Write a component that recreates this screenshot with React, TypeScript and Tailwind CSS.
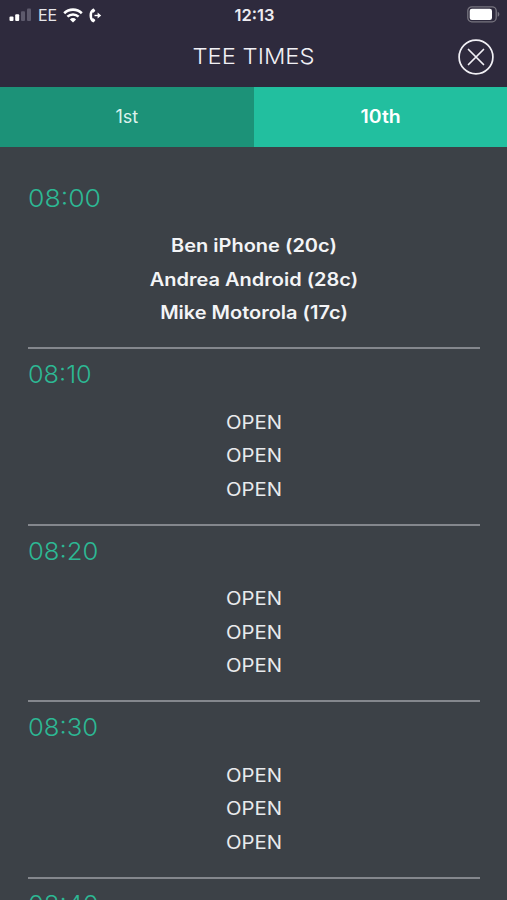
import React, { useState } from 'react';

const OPEN_SLOT = ['OPEN', 'OPEN', 'OPEN'];

const SLOTS = [
  {
    time: '08:00',
    stretch: 'scale-x-[1.085]',
    booked: true,
    names: ['Ben iPhone (20c)', 'Andrea Android (28c)', 'Mike Motorola (17c)'],
  },
  { time: '08:10', stretch: 'scale-x-[1.03]', booked: false, names: OPEN_SLOT },
  { time: '08:20', stretch: 'scale-x-[1.045]', booked: false, names: OPEN_SLOT },
  { time: '08:30', stretch: 'scale-x-[1.045]', booked: false, names: OPEN_SLOT },
  { time: '08:40', stretch: 'scale-x-[1.045]', booked: false, names: [] },
];

const SignalIcon = () => (
  <svg width="24" height="14" viewBox="0 0 24 14">
    <rect x="0.5" y="8.5" width="4" height="4.5" rx="1" fill="#fff" />
    <rect x="6.2" y="6.3" width="4" height="6.7" rx="1" fill="#fff" />
    <rect x="12" y="3.2" width="4" height="9.8" rx="1" fill="#5d5a6c" />
    <rect x="18" y="0.5" width="4" height="12.5" rx="1" fill="#5d5a6c" />
  </svg>
);

const WifiIcon = () => (
  <svg width="20" height="15" viewBox="0 0 20 15" fill="none" stroke="#fff">
    <path d="M1.2 5.2a12.6 12.6 0 0117.6 0" strokeWidth="2.6" />
    <path d="M4.4 8.7a8 8 0 0111.2 0" strokeWidth="2.5" />
    <path d="M10 14.6L6.9 11.4a4.4 4.4 0 016.2 0z" fill="#fff" stroke="none" />
  </svg>
);

const CallForwardIcon = () => (
  <svg width="13" height="15" viewBox="0 0 13 15" fill="none">
    <path
      d="M3.8.7C1.4 1.9.5 4.5.5 7.4s1 5.6 3.4 6.9c.4.2.8.1 1.1-.2l1.1-1.4c.3-.4.2-.8-.1-1.1l-1.4-1.2c-.3-.3-.7-.2-1.1 0-.3-.9-.4-1.9-.4-3s.1-2 .4-2.9c.4.2.8.2 1.1-.1L6 3.3c.3-.3.4-.7.1-1.1L4.9.8C4.6.5 4.2.5 3.8.7z"
      fill="#fff"
    />
    <path d="M5.5 7.5h4" stroke="#fff" strokeWidth="1.4" />
    <path d="M8.6 4.6l3.6 2.9-3.6 2.9z" fill="#fff" />
  </svg>
);

const BatteryIcon = () => (
  <svg width="33" height="17" viewBox="0 0 33 17">
    <rect x="0.8" y="0.8" width="28.4" height="15" rx="4" fill="none" stroke="#77747f" strokeWidth="1.3" />
    <rect x="2.7" y="2.7" width="22.3" height="11.2" rx="2.2" fill="#fff" />
    <path d="M30.7 5.8c2.2.8 2.2 4.2 0 5z" fill="#77747f" />
  </svg>
);

const CloseIcon = () => (
  <svg width="36" height="36" viewBox="0 0 36 36" fill="none" stroke="#f1f0f5" strokeWidth="1.7">
    <circle cx="18" cy="18" r="16.9" />
    <path d="M10.5 10.5l15 15M25.5 10.5l-15 15" strokeLinecap="round" />
  </svg>
);

function TeeTimeRow({ slot }) {
  return (
    <li className="h-[176.5px] shrink-0 border-b-2 border-[#84878d] pt-[9px]">
      <h2
        className={`h-8 origin-left text-[24.5px] leading-8 font-[350] text-[#2db894] ${slot.stretch}`}
      >
        {slot.time}
      </h2>
      <div className="mt-[15.6px] scale-x-[1.11] text-center text-[18px] leading-[33.6px]">
        {slot.names.map((name, i) => (
          <p
            key={i}
            className={
              slot.booked
                ? 'font-semibold text-[#f3f4f6]'
                : 'text-[18.3px] font-normal text-[#e8eaed]'
            }
          >
            {name}
          </p>
        ))}
      </div>
    </li>
  );
}

function App() {
  const [tee, setTee] = useState('10th');

  return (
    <div className="flex h-[900px] w-[507px] flex-col overflow-hidden bg-[#3c4147] font-['Inter',sans-serif] text-white">
      <header className="h-[87px] shrink-0 bg-[#2e2a3d]">
        <div className="grid h-[30px] grid-cols-[1fr_auto_1fr] items-center pr-[7px] pl-[9px]">
          <div className="flex items-center">
            <SignalIcon />
            <span className="ml-[5px] w-[25px] text-[16px] leading-5 text-[#e6e5ea]">EE</span>
            <WifiIcon />
            <span className="ml-[6px]">
              <CallForwardIcon />
            </span>
          </div>
          <span className="text-[16.5px] leading-5 font-semibold text-[#edecf1]">12:13</span>
          <div className="flex justify-end pb-[2px]">
            <BatteryIcon />
          </div>
        </div>
        <div className="grid h-[54px] grid-cols-[1fr_auto_1fr] items-center px-[13px]">
          <h1 className="col-start-2 scale-x-[1.08] pb-[2px] text-[22px] leading-8 font-[350] text-[#f1f0f5]">
            TEE TIMES
          </h1>
          <button className="justify-self-end" aria-label="Close">
            <CloseIcon />
          </button>
        </div>
      </header>

      <nav className="grid h-[60px] shrink-0 grid-cols-2 text-[18px]">
        {['1st', '10th'].map((name) => (
          <button
            key={name}
            onClick={() => setTee(name)}
            className={
              tee === name
                ? 'bg-[#22bf9f] pb-[2px] font-semibold'
                : 'bg-[#1c9278] pb-[2px] font-normal text-[#dcf1ec]'
            }
          >
            <span className={tee === name ? 'inline-block scale-x-[1.08]' : 'inline-block'}>
              {name}
            </span>
          </button>
        ))}
      </nav>

      <ul className="flex flex-col pt-[25.6px] pr-[27px] pl-7">
        {SLOTS.map((slot) => (
          <TeeTimeRow key={slot.time} slot={slot} />
        ))}
      </ul>
    </div>
  );
}

export default App;
